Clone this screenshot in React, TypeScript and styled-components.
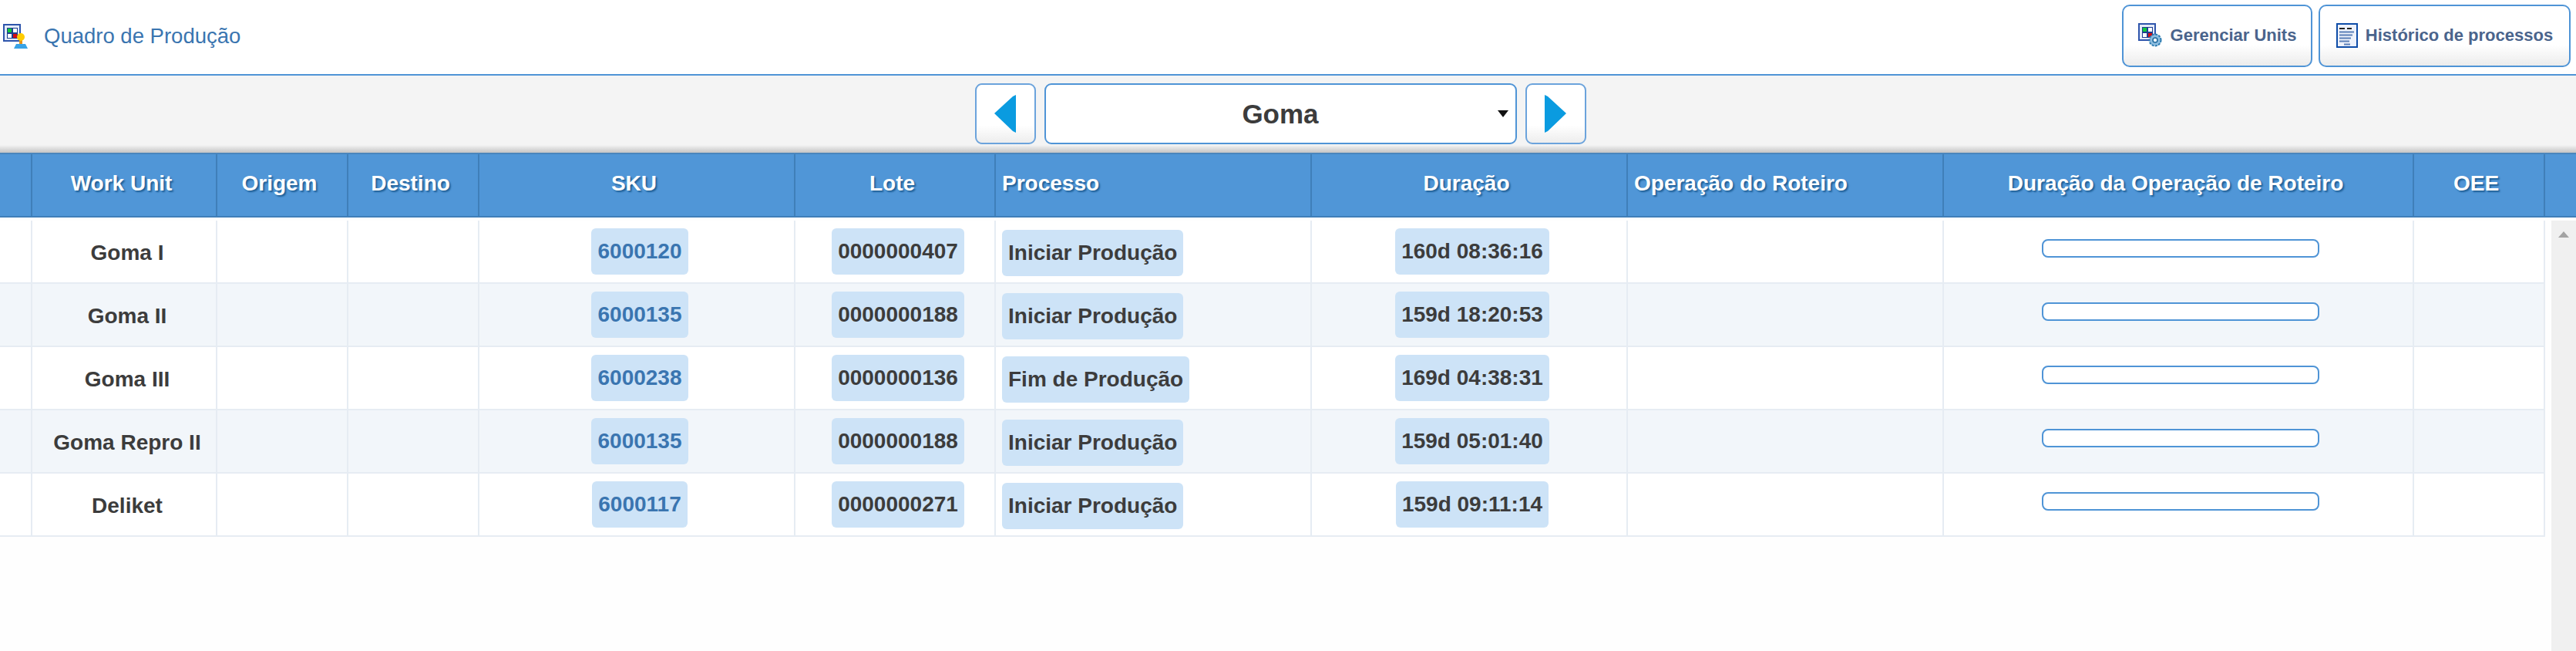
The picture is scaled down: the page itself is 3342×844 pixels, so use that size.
import { FC } from 'react'
import styled, { createGlobalStyle } from 'styled-components'

const GlobalStyle = createGlobalStyle`
  html, body {
    margin: 0;
    padding: 0;
    background: #fff;
    font-family: "Liberation Sans", Arial, sans-serif;
  }
`

const COLUMNS = '42px 240px 170px 170px 410px 260px 410px 410px 410px 610px 170px'

const Page = styled.div`
  width: 3342px;
  height: 844px;
  overflow: hidden;
  display: flex;
  flex-direction: column;
`

const TopBar = styled.div`
  height: 96px;
  box-sizing: border-box;
  padding: 6px 7px 9px 4px;
  display: flex;
  justify-content: space-between;
  align-items: stretch;
`

const Brand = styled.div`
  display: flex;
  align-items: center;
  gap: 21px;
  font-size: 27.5px;
  color: #3a75b0;
`

const Actions = styled.div`
  display: flex;
  gap: 8px;
`

const ActionButton = styled.div<{ $width: number }>`
  width: ${p => p.$width}px;
  box-sizing: border-box;
  display: flex;
  align-items: center;
  justify-content: center;
  gap: 10px;
  border: 2px solid #4f94d6;
  border-radius: 10px;
  background: linear-gradient(#fff 65%, #ececec);
  padding-bottom: 2px;
  font-size: 22px;
  font-weight: bold;
  color: #4a648c;
`

const Toolbar = styled.div`
  height: 102px;
  box-sizing: border-box;
  border-top: 2px solid #4f94d6;
  background: linear-gradient(#f4f4f4 90%, #c4c4c4);
  padding: 10px 20px 0 0;
  display: flex;
  justify-content: center;
  gap: 11px;
`

const ArrowButton = styled.div`
  width: 79px;
  height: 79px;
  box-sizing: border-box;
  border: 2px solid #6ba3dc;
  border-radius: 9px;
  background: linear-gradient(#fff 70%, #ededed);
  display: flex;
  align-items: center;
  justify-content: center;
`

const Selector = styled.div`
  position: relative;
  width: 613px;
  height: 79px;
  box-sizing: border-box;
  border: 2px solid #4f94d6;
  border-radius: 9px;
  background: #fff;
  display: flex;
  align-items: center;
  justify-content: center;
  font-size: 35px;
  font-weight: bold;
  color: #3c3c3c;
`

const Caret = styled.span`
  position: absolute;
  right: 9px;
  top: 33px;
  border-left: 7px solid transparent;
  border-right: 7px solid transparent;
  border-top: 9px solid #111;
`

const HeaderRow = styled.div`
  height: 84px;
  box-sizing: border-box;
  display: grid;
  grid-template-columns: ${COLUMNS} 1fr;
  background: #5096d7;
  border-top: 2px solid #4a86bd;
  border-bottom: 2px solid #3f7fb9;
`

const HeaderCell = styled.div<{ $left?: boolean }>`
  display: flex;
  align-items: center;
  justify-content: ${p => (p.$left ? 'flex-start' : 'center')};
  padding: 0 ${p => (p.$left ? '0 4px 8px' : '7px 4px 0')};
  border-right: 2px solid #3f7fb9;
  font-size: 28px;
  font-weight: bold;
  color: #fff;
  text-shadow: 2px 2px 2px #1f5f96;
  white-space: nowrap;
  &:last-child {
    border-right: none;
  }
`

const Body = styled.div`
  flex: 1;
  padding-top: 4px;
  display: flex;
  justify-content: space-between;
  align-items: stretch;
  background: #fefefe;
`

const Rows = styled.div`
  width: 3302px;
  height: 410px;
`

const Row = styled.div<{ $striped: boolean }>`
  height: 82px;
  box-sizing: border-box;
  display: grid;
  grid-template-columns: ${COLUMNS};
  background: ${p => (p.$striped ? '#f2f6fa' : '#fff')};
  border-bottom: 2px solid #e6ecf3;
`

const Cell = styled.div<{ $left?: boolean }>`
  display: flex;
  align-items: center;
  justify-content: ${p => (p.$left ? 'flex-start' : 'center')};
  padding-left: 8px;
  border-right: 2px solid #e6ecf3;
  font-size: 28px;
  font-weight: bold;
  color: #3c3c3c;
  white-space: nowrap;
`

const UnitLabel = styled.span`
  padding-top: 4px;
`

const Badge = styled.span<{ $link?: boolean; $offset?: number }>`
  height: 60px;
  box-sizing: border-box;
  display: flex;
  align-items: center;
  margin-top: ${p => p.$offset ?? 0}px;
  padding: 0 8px;
  border-radius: 6px;
  background: #cde3f7;
  color: ${p => (p.$link ? '#3a75b0' : '#3c3c3c')};
`

const Progress = styled.div`
  width: 360px;
  height: 24px;
  box-sizing: border-box;
  margin: 0 2px 8px 0;
  border: 2px solid #4f94d6;
  border-radius: 8px;
  background: #fff;
`

const Scrollbar = styled.div`
  width: 32px;
  background: #f0f0f0;
  display: flex;
  justify-content: center;
  padding-top: 14px;
  box-sizing: border-box;
`

const ScrollUp = styled.span`
  width: 0;
  height: 0;
  border-left: 7px solid transparent;
  border-right: 7px solid transparent;
  border-bottom: 8px solid #a3a3a3;
`

const BoardIcon: FC<{ gear?: boolean }> = ({ gear }) => (
  <svg width="32" height="32" viewBox="0 0 32 32">
    <rect x="1" y="1" width="21" height="21" fill="#e4ebf8" stroke="#2f55ac" strokeWidth="2" />
    <rect x="5" y="5" width="14" height="14" fill="#1d3f8f" />
    <rect x="6" y="6" width="5" height="5" fill="#10c83c" />
    <rect x="13" y="6" width="5" height="5" fill="#fff" />
    <rect x="6" y="13" width="5" height="5" fill="#fff" />
    <rect x="13" y="13" width="5" height="5" fill="#d40d12" />
    {gear ? (
      <g>
        <circle cx="22" cy="22" r="7.5" fill="#8dbde0" stroke="#2d7cb0" strokeWidth="2" strokeDasharray="3 1.4" />
        <circle cx="22" cy="22" r="3" fill="#eef6fb" stroke="#1f6a9e" strokeWidth="1.5" />
      </g>
    ) : (
      <g>
        <rect x="21" y="21" width="4" height="6" fill="#e8941a" />
        <circle cx="23" cy="17" r="5" fill="#ffcc00" />
        <path d="M14 32 L17 26 H29 L32 32 Z" fill="#39a3e6" />
      </g>
    )}
  </svg>
)

const ListIcon: FC = () => (
  <svg width="28" height="32" viewBox="0 0 28 32">
    <rect x="1" y="1" width="26" height="30" fill="#eef2fb" stroke="#0f4da8" strokeWidth="2" />
    <rect x="4" y="6" width="7" height="2" fill="#222" />
    <rect x="14" y="6" width="6" height="2" fill="#222" />
    {[11, 15, 19, 23, 27].map((y, i) => (
      <rect key={y} x={i === 4 ? 10 : 4} y={y - 0.5} width={i === 4 ? 8 : 19 - i * 2} height="2" fill="#5b7fb8" />
    ))}
  </svg>
)

const Arrow: FC<{ right?: boolean }> = ({ right }) => (
  <svg width="28" height="49" viewBox="0 0 28 49">
    <path d={right ? 'M0 0 L4 2 L28 24 L4 47 L0 49 Z' : 'M28 0 L24 2 L0 24 L24 47 L28 49 Z'} fill="#0a9be0" />
  </svg>
)

const columns = ['', 'Work Unit', 'Origem', 'Destino', 'SKU', 'Lote', 'Processo', 'Duração', 'Operação do Roteiro', 'Duração da Operação de Roteiro', 'OEE', '']

const rows = [
  { unit: 'Goma I', sku: '6000120', lot: '0000000407', process: 'Iniciar Produção', time: '160d 08:36:16' },
  { unit: 'Goma II', sku: '6000135', lot: '0000000188', process: 'Iniciar Produção', time: '159d 18:20:53' },
  { unit: 'Goma III', sku: '6000238', lot: '0000000136', process: 'Fim de Produção', time: '169d 04:38:31' },
  { unit: 'Goma Repro II', sku: '6000135', lot: '0000000188', process: 'Iniciar Produção', time: '159d 05:01:40' },
  { unit: 'Deliket', sku: '6000117', lot: '0000000271', process: 'Iniciar Produção', time: '159d 09:11:14' },
]

const App: FC = () => (
  <Page>
    <GlobalStyle />
    <TopBar>
      <Brand>
        <BoardIcon />
        Quadro de Produção
      </Brand>
      <Actions>
        <ActionButton $width={247}>
          <BoardIcon gear />
          Gerenciar Units
        </ActionButton>
        <ActionButton $width={327}>
          <ListIcon />
          Histórico de processos
        </ActionButton>
      </Actions>
    </TopBar>
    <Toolbar>
      <ArrowButton><Arrow /></ArrowButton>
      <Selector>
        Goma
        <Caret />
      </Selector>
      <ArrowButton><Arrow right /></ArrowButton>
    </Toolbar>
    <HeaderRow>
      {columns.map((name, i) => (
        <HeaderCell key={i} $left={name === 'Processo' || name === 'Operação do Roteiro'}>
          {name}
        </HeaderCell>
      ))}
    </HeaderRow>
    <Body>
      <Rows>
        {rows.map((row, i) => (
          <Row key={i} $striped={i % 2 === 1}>
            <Cell />
            <Cell><UnitLabel>{row.unit}</UnitLabel></Cell>
            <Cell />
            <Cell />
            <Cell><Badge $link>{row.sku}</Badge></Cell>
            <Cell><Badge>{row.lot}</Badge></Cell>
            <Cell $left><Badge $offset={4}>{row.process}</Badge></Cell>
            <Cell><Badge>{row.time}</Badge></Cell>
            <Cell />
            <Cell><Progress /></Cell>
            <Cell />
          </Row>
        ))}
      </Rows>
      <Scrollbar><ScrollUp /></Scrollbar>
    </Body>
  </Page>
)

export default App
